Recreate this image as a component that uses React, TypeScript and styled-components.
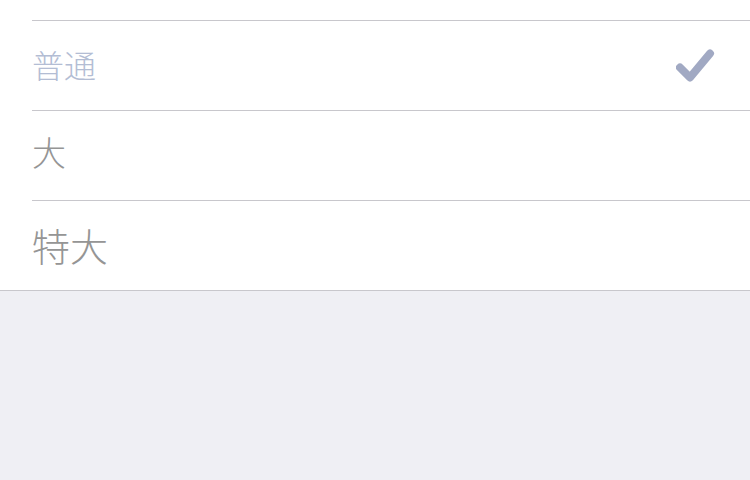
import styled, { createGlobalStyle } from "styled-components";

const GlobalStyle = createGlobalStyle`
    html, body {
        margin: 0;
        padding: 0;
        background-color: #efeff4;
        font-family: "Noto Sans CJK JP", "Noto Sans", sans-serif;
    }
`;

//the page itself, gray below the list
const Page = styled.div`
    width: 750px;
    height: 480px;
    background-color: #efeff4;
    overflow: hidden;
`;

//white list block with a full width bottom border
const List = styled.div`
    display: flex;
    flex-direction: column;
    background-color: #ffffff;
    border-bottom: 1px solid #c8c7cc;
`;

//spacer that shows the end of the row above
const TopStub = styled.div`
    height: 20px;
`;

//one option row, the line starts at the text inset
const Row = styled.div`
    display: flex;
    align-items: center;
    justify-content: space-between;
    height: 89px;
    margin-left: 32px;
    padding-right: 34px;
    border-top: 1px solid #c8c7cc;
`;

//each label is shown in the text size it stands for
const Label = styled.span<{ selected: boolean; size: number; raise: number }>`
    font-size: ${(props) => props.size}px;
    font-weight: 300;
    line-height: 1;
    margin-bottom: ${(props) => props.raise * 2}px;
    color: ${(props) => (props.selected ? "#b3bdd4" : "#959595")};
`;

const Check = () => (
    <svg width="40" height="40" viewBox="0 0 40 40">
        <path
            d="M4 21.5 L14 31.5 L34 7.5"
            fill="none"
            stroke="#a1a9c3"
            strokeWidth="8"
            strokeLinecap="round"
            strokeLinejoin="round"
        />
    </svg>
);

const options = [
    { name: "普通", size: 32, raise: 2, selected: true },
    { name: "大", size: 34, raise: 4, selected: false },
    { name: "特大", size: 38, raise: 1, selected: false },
];

export default function App() {
    return (
        <Page>
            <GlobalStyle />
            <List>
                <TopStub />
                {options.map((opt) => (
                    <Row key={opt.name}>
                        <Label selected={opt.selected} size={opt.size} raise={opt.raise}>
                            {opt.name}
                        </Label>
                        {opt.selected && <Check />}
                    </Row>
                ))}
            </List>
        </Page>
    );
}
